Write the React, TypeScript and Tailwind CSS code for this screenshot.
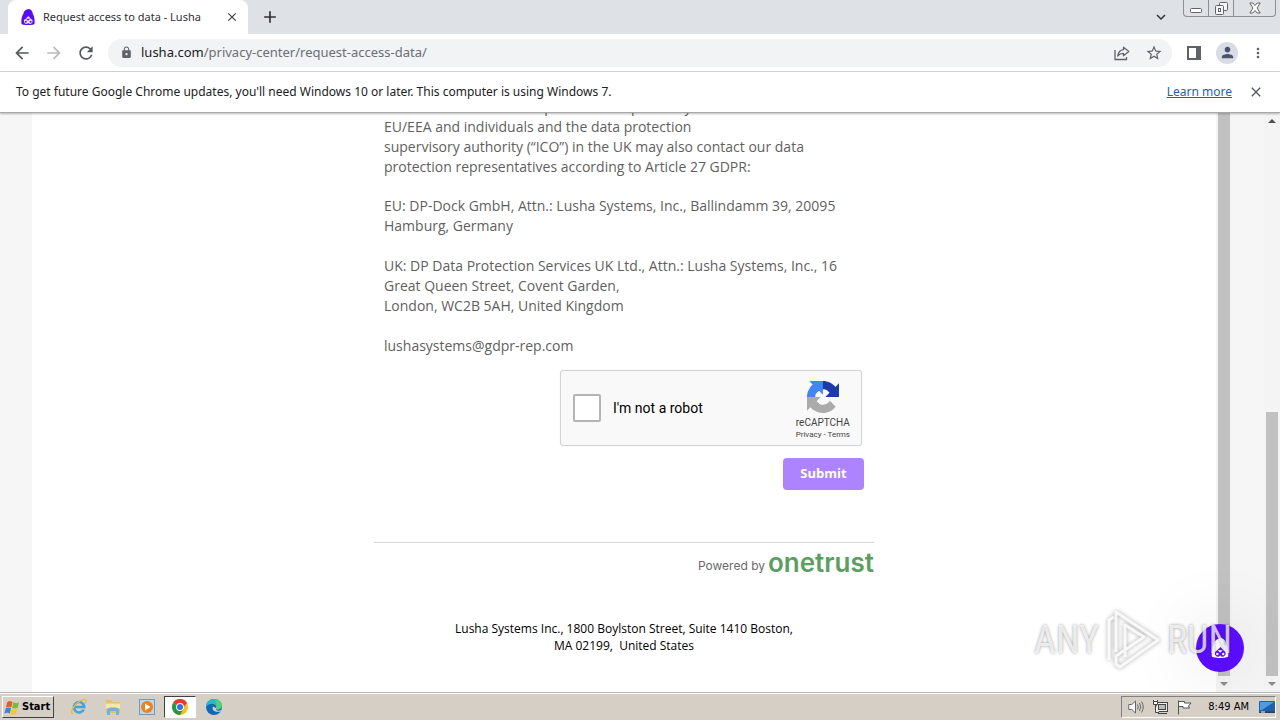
import React from "react";
import {
  MdArrowBack,
  MdArrowForward,
  MdClose,
  MdLock,
  MdMoreVert,
  MdRefresh,
  MdStarBorder,
  MdPerson,
  MdAdd,
  MdKeyboardArrowDown,
} from "react-icons/md";

const uiFont = "font-['Noto_Sans',sans-serif]";

function LushaMark({ className, color, detail }: { className: string; color: string; detail: string }) {
  return (
    <svg viewBox="0 0 16 18" className={className} aria-hidden="true">
      <path
        d="M9 0C5.500 .6 3.200 2 2.800 5.400 1 8 .3 11.500.6 16.500c1 1.200 3 1.500 7.400 1.500s6.400-.3 7.400-1.500C15.700 12 15.200 8.500 13.500 5.500 13 2.300 11.500.6 9 0Z"
        fill={color}
      />
      <path d="M8.500 8 5.500 11 3.500 12.500v2.500l1.500 1.600 2 .2 1.200-1.200 1.200 1.200 2-.2L13 15v-2.500L11 11Z" fill={detail} />
      <path d="M5.800 11h4.600l-2.200 2.200Z" fill={color} />
      <circle cx="5.600" cy="14.400" r="1.100" fill={color} />
      <circle cx="10.900" cy="14.400" r="1.100" fill={color} />
    </svg>
  );
}

function TabStrip() {
  return (
    <div className="flex h-[34px] shrink-0 items-stretch bg-[#dee1e6] pl-2">
      <div className="flex w-60 items-center rounded-t-lg bg-white pr-2 pl-3">
        <LushaMark className="h-4 w-4" color="#5a0cff" detail="#efe4ff" />
        <span className="ml-[7px] flex-1 text-[11px] whitespace-nowrap text-[#303236]">Request access to data - Lusha</span>
        <button aria-label="Close tab" className="flex h-4 w-4 items-center justify-center text-[#3c4043]">
          <MdClose size={14} />
        </button>
      </div>
      <button aria-label="New tab" className="ml-3 flex w-5 items-center justify-center text-[#303236]">
        <MdAdd size={20} />
      </button>
      <div className="flex-1" />
      <button aria-label="Search tabs" className="mr-3 flex w-5 items-center justify-center text-[#303236]">
        <MdKeyboardArrowDown size={18} />
      </button>
      <div className="mr-1 flex h-[17px] w-[93px] rounded-b border border-t-0 border-[#8b8f96] text-[#5f6368]">
        <button aria-label="Minimize" className="flex w-[25px] items-center justify-center border-r border-[#8b8f96]">
          <svg viewBox="0 0 12 12" className="h-3 w-3" fill="#fff" stroke="currentColor">
            <rect x=".5" y="6.500" width="11" height="4" rx="1" />
          </svg>
        </button>
        <button aria-label="Restore" className="flex w-[25px] items-center justify-center border-r border-[#8b8f96]">
          <svg viewBox="0 0 13 13" className="h-[13px] w-[13px]" fill="#f4f5f7" stroke="currentColor">
            <rect x="4.500" y=".5" width="8" height="8" rx="1" />
            <rect x=".5" y="3.500" width="8" height="9" rx="1" />
            <rect x="3.500" y="6.500" width="2" height="3" />
          </svg>
        </button>
        <button aria-label="Close window" className="flex flex-1 items-center justify-center">
          <svg viewBox="0 0 12 12" className="h-3 w-3" fill="#fff" stroke="currentColor">
            <path d="M.8 1h3L6 3.500 8.200 1h3L8 6l3.200 5h-3L6 8.500 3.800 11h-3L4 6Z" />
          </svg>
        </button>
      </div>
    </div>
  );
}

function Toolbar() {
  return (
    <div className="flex h-[38px] shrink-0 items-center border-b border-[#d5d7da] bg-white pr-3.5 pl-3 text-[#5f6368]">
      <button aria-label="Back" className="flex w-5 justify-center text-[#55585d]">
        <MdArrowBack size={20} />
      </button>
      <button aria-label="Forward" className="ml-3 flex w-5 justify-center text-[#b9bbbe]">
        <MdArrowForward size={20} />
      </button>
      <button aria-label="Reload" className="ml-3 flex w-5 justify-center text-[#55585d]">
        <MdRefresh size={20} />
      </button>
      <div className="ml-3 flex h-7 flex-1 items-center rounded-full bg-[#f1f3f4] pr-2 pl-3">
        <MdLock size={13} />
        <a href="#address" className="ml-2 flex-1 text-[13px] text-[#6b6f74]">
          <span className="text-[#202124]">lusha.com</span>/privacy-center/request-access-data/
        </a>
        <button aria-label="Share this page" className="flex w-5 justify-center">
          <svg viewBox="0 0 16 16" className="h-4 w-4" fill="none" stroke="currentColor" strokeWidth="1.300">
            <path d="M1 5v9.500h11.500V12" />
            <path d="M9.500 2.200 14.800 6.500 9.500 10.800V8.300C7 8.200 5.200 9 3.700 11 4.200 7.500 6 5 9.500 4.600Z" strokeLinejoin="round" />
          </svg>
        </button>
        <button aria-label="Bookmark this page" className="ml-3 flex w-5 justify-center">
          <MdStarBorder size={18} />
        </button>
      </div>
      <button aria-label="Side panel" className="ml-3 flex w-5 justify-center">
        <svg viewBox="0 0 14 14" className="h-3.5 w-3.5">
          <path d="M0 0h14v14H0Zm2 2v10h7V2Z" fill="currentColor" fillRule="evenodd" />
        </svg>
      </button>
      <button aria-label="Profile" className="ml-3 flex h-[22px] w-[22px] items-center justify-center rounded-full bg-[#dadce3] text-[#47536f]">
        <MdPerson size={17} />
      </button>
      <button aria-label="Menu" className="ml-3 flex w-4 justify-center">
        <MdMoreVert size={18} />
      </button>
    </div>
  );
}

function InfoBar() {
  return (
    <div className="z-10 flex h-[41px] shrink-0 items-center border-b border-[#a8a8a8] bg-white pr-4 pl-4 text-[12px] text-[#202124] shadow-[0_1px_2px_#0004]">
      <p className="flex-1">To get future Google Chrome updates, you'll need Windows 10 or later. This computer is using Windows 7.</p>
      <a href="#learn" className="text-[#1a62b8] underline">
        Learn more
      </a>
      <button aria-label="Dismiss" className="ml-4 flex w-4 justify-center text-[#55585d]">
        <MdClose size={16} />
      </button>
    </div>
  );
}

function RecaptchaLogo() {
  return (
    <svg viewBox="0 0 64 64" className="h-8 w-8" aria-hidden="true">
      <path d="M64 31.955l-.033-1.370V4.687l-7.160 7.160C50.948 4.674 42.033.093 32.050.093c-10.400 0-19.622 4.960-25.458 12.640l11.736 11.860a15.550 15.550 0 0 1 4.754-5.334c2.050-1.600 4.952-2.906 8.968-2.906.485 0 .86.057 1.135.163 4.976.393 9.288 3.140 11.828 7.124l-8.307 8.307L64 31.953" fill="#1c3aa9" />
      <path d="M31.862.094l-1.370.033H4.594l7.160 7.160C4.580 13.147 0 22.060 0 32.046c0 10.400 4.960 19.622 12.640 25.458L24.500 45.768a15.550 15.550 0 0 1-5.334-4.754c-1.600-2.050-2.906-4.952-2.906-8.968 0-.485.057-.86.163-1.135.393-4.976 3.140-9.288 7.124-11.828l8.307 8.307L31.860.095" fill="#4285f4" />
      <path d="M.001 32.045l.033 1.370v25.898l7.160-7.160c5.860 7.173 14.774 11.754 24.760 11.754 10.400 0 19.622-4.960 25.458-12.640l-11.736-11.860a15.550 15.550 0 0 1-4.754 5.334c-2.050 1.600-4.952 2.906-8.968 2.906-.485 0-.86-.057-1.135-.163-4.976-.393-9.288-3.140-11.828-7.124l8.307-8.307c-10.522.04-22.400.066-27.295-.005" fill="#ababab" />
    </svg>
  );
}

function Scrollbar({ thumb }: { thumb: "long" | "low" }) {
  return (
    <div className="flex w-4 shrink-0 flex-col items-center bg-[#f4f4f4]">
      {thumb === "low" && (
        <div className="flex h-4 shrink-0 items-center">
          <svg viewBox="0 0 8 4" className="h-1 w-2">
            <path d="M0 4 4 0l4 4Z" fill="#505050" />
          </svg>
        </div>
      )}
      {thumb === "low" && <div className="flex-[283]" />}
      <div className={thumb === "low" ? "w-3 flex-[264] bg-[#c1c1c1]" : "w-3 flex-1 bg-[#c1c1c1]"} />
      <div className="flex h-4 shrink-0 items-center">
        <svg viewBox="0 0 8 4" className="h-1 w-2">
          <path d="M0 0h8L4 4Z" fill="#8a8a8a" />
        </svg>
      </div>
    </div>
  );
}

function PrivacyForm() {
  return (
    <main className="flex min-w-0 flex-1 flex-col items-center overflow-hidden bg-white">
      <div className="-mt-4 flex w-[500px] flex-col">
        <div className="px-2.5 text-[14px] leading-5 text-[#5f5f5f]">
          <p>
            Individuals and the data protection supervisory authorities in the
            <br />
            EU/EEA and individuals and the data protection
            <br />
            supervisory authority (“ICO”) in the UK may also contact our data
            <br />
            protection representatives according to Article 27 GDPR:
          </p>
          <p className="mt-[19px]">
            EU: DP-Dock GmbH, Attn.: Lusha Systems, Inc., Ballindamm 39, 20095
            <br />
            Hamburg, Germany
          </p>
          <p className="mt-5">
            UK: DP Data Protection Services UK Ltd., Attn.: Lusha Systems, Inc., 16
            <br />
            Great Queen Street, Covent Garden,
            <br />
            London, WC2B 5AH, United Kingdom
          </p>
          <p className="mt-5">lushasystems@gdpr-rep.com</p>
        </div>

        <div className="mt-3.5 mr-3 flex h-[76px] w-[302px] items-center self-end rounded-[3px] border border-[#d3d3d3] bg-[#f9f9f9] pr-[11px] pl-3 font-[Roboto,sans-serif] shadow-[0_0_2px_#0001]">
          <label className="flex flex-1 items-center gap-3 text-[14px] text-black">
            <input type="checkbox" className="h-7 w-7 appearance-none rounded-[2px] border-2 border-[#b5b5b5] bg-white" />
            I'm not a robot
          </label>
          <div className="flex flex-col items-center pt-1.5 text-[#444]">
            <RecaptchaLogo />
            <span className="mt-1 text-[10px] leading-3">reCAPTCHA</span>
            <span className="text-[8px] leading-3">
              <a href="#privacy">Privacy</a> - <a href="#terms">Terms</a>
            </span>
          </div>
        </div>

        <button className="mt-3 mr-2.5 h-8 w-[81px] self-end rounded bg-[#ae83ff] text-[13px] font-bold text-white">Submit</button>

        <div className="mt-[52px] flex items-center justify-end gap-[3px] border-t border-[#d8d8d8] pt-1 font-[Inter,sans-serif]">
          <span className="pt-1.5 text-[12px] text-[#696969]">Powered by</span>
          <span className="text-[26px] leading-8 font-semibold text-[#5a9e60]">onetrust</span>
        </div>

        <p className="mt-[41px] text-center text-[12px] leading-[17px] text-black">
          Lusha Systems Inc., 1800 Boylston Street, Suite 1410 Boston,
          <br />
          MA 02199,&nbsp; United States
        </p>
      </div>
    </main>
  );
}

function Watermark() {
  return (
    <div className="pointer-events-none absolute right-12 bottom-5 flex items-center gap-1.5 font-['Roboto_Condensed','Liberation_Sans',sans-serif] text-[38px] leading-none text-white/75 [text-shadow:0_0_3px_#0006]">
      <span>ANY</span>
      <svg viewBox="0 0 56 64" className="h-16 w-14 drop-shadow-[0_0_2px_#0006]" fill="none" stroke="#fff" strokeWidth="3" strokeLinejoin="round" strokeOpacity=".85">
        <path d="M11 44V4l42 28-38 27-4-3v-8l28-19-19-12v32" />
        <path d="M4 52V12l5-3" />
      </svg>
      <span>RUN</span>
    </div>
  );
}

function Page() {
  return (
    <div className="relative flex min-h-0 flex-1 overflow-hidden bg-[#f6f6f6] font-['Open_Sans',sans-serif]">
      <div className="w-8 shrink-0" />
      <PrivacyForm />
      <Scrollbar thumb="long" />
      <div className="w-8 shrink-0" />
      <Scrollbar thumb="low" />
      <button
        aria-label="Open chat"
        className="absolute right-9 bottom-5 flex h-12 w-12 items-center justify-center rounded-full bg-[#5a0cff] shadow-[0_0_70px_#00000026]"
      >
        <LushaMark className="h-5 w-5" color="#ffffff" detail="#5a0cff" />
      </button>
      <Watermark />
    </div>
  );
}

function Taskbar() {
  return (
    <div className="flex h-7 shrink-0 items-center border-t border-[#b9b5ad] bg-[#d6cfc6] pr-1 pl-0.5 font-['DejaVu_Sans_Condensed','DejaVu_Sans',sans-serif] text-[11px] text-black shadow-[inset_0_1px_0_#fff]">
      <button className="flex h-[22px] w-[52px] items-center gap-0.5 border border-t-white border-r-[#404040] border-b-[#404040] border-l-white pt-0.5 pl-px font-bold">
        <svg viewBox="0 0 15 15" className="h-4 w-4 shrink-0">
          <path d="M3 2c2-1.500 3.500-1 5 0L6.800 7c-1.500-1-3-1-5 0Z" fill="#ee5a24" />
          <path d="M8.800 2.200c1.600 1 3.200 1 5.200 0L12.800 7.300c-2 1-3.500 1-5.200 0Z" fill="#6fbe3c" />
          <path d="M1.600 7.800c2-1.200 3.500-1 5 0L5.400 12.700c-1.500-1-3-1-5 0Z" fill="#3b86d8" />
          <path d="M7.300 8.100c1.600 1 3.200 1 5.200 0l-1.200 5.100c-2 1-3.500 1-5.200 0Z" fill="#f8c630" />
        </svg>
        Start
      </button>
      <div className="ml-2 flex items-center">
        <button aria-label="Internet Explorer" className="flex w-[34px] justify-center">
          <svg viewBox="0 0 18 18" className="h-[18px] w-[18px]" fill="none">
            <path d="M13.800 11.500A5.200 5.200 0 1 1 14.300 9H5" stroke="#3fa5e0" strokeWidth="2.600" />
            <path d="M3 16C-1 15 4 6 11 2.500c5-2.500 6 0 4 3" stroke="#eab83a" strokeWidth="1.300" />
          </svg>
        </button>
        <button aria-label="Explorer" className="flex w-[34px] justify-center">
          <svg viewBox="0 0 18 18" className="h-[18px] w-[18px]">
            <path d="M2 2h5l1 2h8v11H2Z" fill="#e2c068" />
            <path d="M2 5.500h14v5H2Z" fill="#f8e7a8" />
            <path d="M3 17v-5c0-2 2-2.500 6-2.500s6 .5 6 2.500v5h-3v-4H6v4Z" fill="#6fb4de" />
          </svg>
        </button>
        <button aria-label="Media Player" className="flex w-[34px] justify-center">
          <svg viewBox="0 0 16 16" className="h-4 w-4">
            <rect x=".5" y=".5" width="15" height="15" fill="#b9d8ee" stroke="#6a9cc4" />
            <circle cx="8" cy="8" r="6" fill="#f08019" />
            <path d="M6 4.500v7L11.500 8Z" fill="#fff" />
          </svg>
        </button>
        <button
          aria-label="Chrome"
          className="flex h-[22px] w-8 items-center justify-center border border-t-[#404040] border-r-white border-b-white border-l-[#404040] bg-white"
        >
          <svg viewBox="0 0 16 16" className="h-4 w-4">
            <circle cx="8" cy="8" r="8" fill="#fbc116" />
            <path d="M8 8 1.070 4A8 8 0 0 1 14.930 4Z" fill="#e33b2e" />
            <path d="M8 8 1.070 4A8 8 0 0 0 8 16l3.500-6Z" fill="#279847" />
            <path d="M8 4h6.930L11.500 8Z" fill="#e33b2e" />
            <circle cx="8" cy="8" r="3.900" fill="#fff" />
            <circle cx="8" cy="8" r="3" fill="#2f72e2" />
          </svg>
        </button>
        <button aria-label="Edge" className="ml-0.5 flex w-8 justify-center">
          <svg viewBox="0 0 16 16" className="h-4 w-4">
            <circle cx="8" cy="8" r="8" fill="#1268b8" />
            <path d="M0 8C0 3 4 0 8 0c5 0 8 3.500 8 6.500S13 11 10.500 10.500C9 10 10.500 9 10.300 7.800 10 5.500 7 4.500 4.500 5 2 5.500.5 7 0 8Z" fill="#2fb9c4" />
            <path d="M8 0c5 0 8 3.500 8 6.500S13 11 10.500 10.500C9 10 10.500 9 10.300 7.800 10.800 5 11 2 8 0Z" fill="#56cf74" />
            <path d="M7 7.500c-1.500 3 1 6.500 7.500 5l1.500-2c-3 2-7 1.500-6-1.500Z" fill="#d6cfc6" />
          </svg>
        </button>
      </div>
      <div className="flex-1" />
      <div className="flex h-[22px] items-center border border-t-[#808080] border-r-white border-b-white border-l-[#808080] pl-1.5">
        <svg viewBox="0 0 16 16" className="h-4 w-4" fill="#fff" stroke="#666">
          <path d="M.8 5.500h3L7.500 2v12L3.800 10.500h-3Z" />
          <path d="M9.500 5.500q1.600 2.500 0 5M11.500 4q2.600 4 0 8M13.500 2.500q3.600 5.500 0 11" fill="none" />
        </svg>
        <svg viewBox="0 0 16 16" className="ml-2 h-4 w-4" fill="#eee" stroke="#444">
          <rect x="4.500" y="3.500" width="11" height="9" />
          <rect x="6.500" y="5.500" width="7" height="5" fill="#bbb" />
          <path d="M6 14.500h9M1.500 1v3.500h4V1M3.500 4.500v9H7" />
          <path d="M1.500 2.500h4v3h-4Z" fill="#fff" />
        </svg>
        <svg viewBox="0 0 16 16" className="ml-2 h-4 w-4" fill="#fff" stroke="#555">
          <path d="M2.500 1.500v14M2.500 2.500h6v1.500h6.500l-2.500 3 1 2H7V7.500H2.500Z" />
        </svg>
        <time className="ml-4 pt-0.5 whitespace-nowrap">8:49 AM</time>
        <svg viewBox="0 0 16 14" className="ml-2.5 h-3.5 w-4">
          <rect x="0" y="1" width="16" height="11" rx="1" fill="#1f5fae" />
          <path d="M1 2h14L3 10H1Z" fill="#4f9be2" />
          <path d="M0 11.500h16V13H0Z" fill="#23406b" />
          <path d="M2 12h4" stroke="#fff" />
        </svg>
      </div>
    </div>
  );
}

export default function App() {
  return (
    <div className="flex h-screen flex-col overflow-hidden bg-white">
      <header className={`${uiFont} flex shrink-0 flex-col`}>
        <TabStrip />
        <Toolbar />
        <InfoBar />
      </header>
      <Page />
      <Taskbar />
    </div>
  );
}
